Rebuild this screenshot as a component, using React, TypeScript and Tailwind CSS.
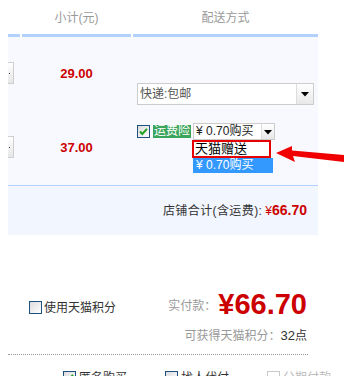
function Check({ checked = false, disabled = false }: { checked?: boolean; disabled?: boolean }) {
  return (
    <span
      className={
        "relative inline-block h-[13px] w-[13px] shrink-0 border " +
        (disabled
          ? "border-[#c8c8c8] bg-white"
          : "border-[#1c5180] bg-gradient-to-br from-[#dcdcdc] to-white")
      }
    >
      {checked && (
        <svg viewBox="0 0 11 11" className="absolute left-0 top-0 h-[11px] w-[11px]">
          <path d="M2 5.5 L4.3 8 L9 2.8" fill="none" stroke="#21a121" strokeWidth="2" />
        </svg>
      )}
    </span>
  )
}

function Arrow() {
  return (
    <svg width="12" height="12" viewBox="0 0 12 12" className="block">
      <path d="M2 4 H10 L6 8.5 Z" fill="#000" />
    </svg>
  )
}

function QtyBox() {
  return (
    <div className="relative h-[22px] w-[6px] rounded-r-[1px] border border-l-0 border-[#cfcfcf] bg-gradient-to-b from-white to-[#e6e6e6]">
      <span className="absolute left-[1px] top-[10px] h-[1px] w-[1px] bg-[#333]" />
    </div>
  )
}

export default function App() {
  return (
    <div className="relative h-[376px] w-[344px] overflow-hidden bg-white font-['Liberation_Sans','Noto_Sans_CJK_SC',sans-serif] text-[12px]">
      {/* 表头 */}
      <div className="flex h-[34px] pl-2 text-[#999]">
        <div className="w-[14px]" />
        <div className="w-[109px] pt-[10px] text-center leading-[16px]">小计(元)</div>
        <div className="w-[2px]" />
        <div className="w-[185px] pt-[10px] text-center leading-[16px]">配送方式</div>
      </div>
      <div className="flex gap-[2px] pl-2">
        <div className="h-[3px] w-[12px] bg-[#b2d1ff]" />
        <div className="h-[3px] w-[109px] bg-[#b2d1ff]" />
        <div className="h-[3px] w-[185px] bg-[#b2d1ff]" />
      </div>

      {/* 商品行 */}
      <div className="ml-2 flex h-[148px] w-[310px] bg-[#f8f9ff]">
        <div className="flex w-[14px] flex-col pt-[25px]">
          <QtyBox />
          <div className="mt-[52px]">
            <QtyBox />
          </div>
        </div>
        <div className="flex w-[109px] flex-col pt-[31px] text-center text-[13px] font-bold leading-[12px] text-[#cc0000]">
          <div>29.00</div>
          <div className="mt-[62px]">37.00</div>
        </div>
        <div className="w-[2px]" />
        <div className="relative w-[185px] pl-[4px] pt-[46px]">
          <div className="flex h-[22px] w-[177px] border border-[#cccccc] bg-white">
            <div className="flex-1 pl-[2px] leading-[20px] text-[#555]">快递:包邮</div>
            <div className="flex w-[17px] items-center justify-center border-l border-[#dddddd] bg-gradient-to-b from-white to-[#e8e8e8]">
              <Arrow />
            </div>
          </div>

          <div className="mt-[18px] flex h-[17px] items-center">
            <Check checked />
            <span className="ml-[3px] h-[13px] bg-[#3ba55c] px-[1px] leading-[13px] text-white">运费险</span>
            <div className="relative ml-[2px] flex h-[17px] w-[82px] border border-[#cccccc] bg-white">
              <div className="flex-1 pl-[2px] leading-[15px] text-[#222]">¥ 0.70购买</div>
              <div className="flex w-[13px] items-center justify-center border-l border-[#dddddd] bg-gradient-to-b from-white to-[#e8e8e8]">
                <Arrow />
              </div>
              <div className="absolute left-[-2px] top-[16px] w-[82px]">
                <div className="h-[18px] w-[79px] border-[2px] border-[#e60000] bg-white pl-[1px] leading-[13px] text-[13px] text-black">
                  天猫赠送
                </div>
                <div className="ml-[1px] h-[15px] w-[80px] bg-[#3399ff] pl-[3px] leading-[15px] text-white">¥ 0.70购买</div>
              </div>
            </div>
          </div>
        </div>
      </div>

      {/* 店铺合计 */}
      <div className="ml-2 flex h-[50px] w-[310px] items-center justify-end border-t border-[#b2d1ff] bg-[#f2f6ff] pr-[11px]">
        <span className="tracking-[0.4px] text-[#333]">店铺合计(含运费):</span>
        <span className="ml-[3px] text-[#cc0000]">¥</span>
        <span className="text-[14px] font-bold text-[#cc0000]">66.70</span>
      </div>

      {/* 结算 */}
      <div className="ml-2 mt-[57px] flex h-[24px] w-[310px] items-center pr-[11px]">
        <div className="mt-[7px] flex items-center pl-[21px]">
          <Check />
          <span className="ml-[2px] text-[#333]">使用天猫积分</span>
        </div>
        <div className="ml-auto flex items-center">
          <span className="mt-[3px] text-[#999]">实付款：</span>
          <span className="ml-[2px] text-[29px] font-bold leading-[24px] text-[#cc0000]">¥66.70</span>
        </div>
      </div>
      <div className="ml-2 mt-[10px] w-[310px] pr-[11px] text-right text-[#999]">
        可获得天猫积分：<span className="text-[13px] text-[#333]">32</span><span className="text-[#333]">点</span>
      </div>
      <div className="ml-2 mt-[8px] w-[300px] border-t border-dotted border-[#999]" />
      <div className="ml-2 mt-[14px] flex items-center text-[#333]">
        <div className="ml-[55px] flex items-center">
          <Check checked />
          <span className="ml-[3px]">匿名购买</span>
        </div>
        <div className="ml-[38px] flex items-center">
          <Check />
          <span className="ml-[3px]">找人代付</span>
        </div>
        <div className="ml-[38px] flex items-center text-[#bbb]">
          <Check disabled />
          <span className="ml-[3px]">分期付款</span>
        </div>
      </div>

      {/* 红色箭头 */}
      <svg className="absolute left-[270px] top-[140px]" width="74" height="28" viewBox="0 0 74 28">
        <path d="M6 13 L22 6 L22 10.5 L74 15 L74 22 L23 16 L25 22 Z" fill="#f00000" />
      </svg>
    </div>
  )
}
